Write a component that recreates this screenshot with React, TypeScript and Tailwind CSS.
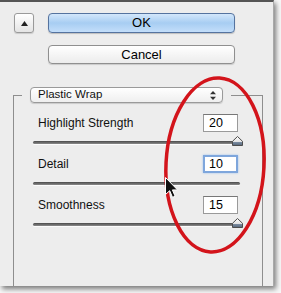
import React from "react";

function Thumb() {
  return (
    <svg className="absolute right-[-3px] top-[-5px]" width="11" height="10" viewBox="0 0 11 10">
      <defs>
        <linearGradient id="tg" x1="0" y1="0" x2="0" y2="1">
          <stop offset="0" stopColor="#ffffff" />
          <stop offset="0.6" stopColor="#e2e2e2" />
          <stop offset="0.61" stopColor="#7d8ea3" />
          <stop offset="1" stopColor="#56667a" />
        </linearGradient>
      </defs>
      <path d="M5.5 0.5 L10.5 5.3 L10.5 9.5 L0.5 9.5 L0.5 5.3 Z" fill="url(#tg)" stroke="#4d4d4d" strokeWidth="1" />
    </svg>
  );
}

function Slider({ thumb }: { thumb: boolean }) {
  return (
    <div className="h-[23px] pt-[9px]">
      <div className="relative ml-[-5px] mr-[-2px] h-[3px] rounded-full bg-gradient-to-b from-[#4a4a4a] to-[#8c8c8c] shadow-[0_1px_0_rgba(255,255,255,0.8)]">
        {thumb && <Thumb />}
      </div>
    </div>
  );
}

function Param({ label, value, focused, thumb }: { label: string; value: string; focused?: boolean; thumb: boolean }) {
  return (
    <div className="flex flex-col">
      <div className="flex h-[18px] items-center justify-between">
        <span className="text-[12px] text-[#111]">{label}</span>
        <div
          className={
            focused
              ? "flex h-[18px] w-[35px] items-center border-2 border-[#7ea6dc] bg-white pl-[4px] text-[12.5px] text-black shadow-[0_0_2px_#9cc0ee]"
              : "flex h-[18px] w-[35px] items-center border border-[#9a9a9a] border-t-[#777] bg-white pl-[5px] text-[12.5px] text-black"
          }
        >
          {value}
        </div>
      </div>
      <Slider thumb={thumb} />
    </div>
  );
}

export default function App() {
  return (
    <div className="relative h-[293px] w-[281px] overflow-hidden bg-[#f7f7f7] font-['Liberation_Sans',Arial,sans-serif]">
      <div className="flex h-[286px] w-[274px] flex-col border-t-2 border-r border-t-[#555] border-r-[#a9a9a9] bg-[#ededed] pt-[11px] shadow-[2px_3px_5px_rgba(0,0,0,0.5)]">
        <div className="flex gap-[14px] pl-[14px]">
          <div className="flex h-[20px] w-[20px] items-center justify-center rounded-[3px] border border-[#9a9a9a] bg-gradient-to-b from-white to-[#e4e4e4] shadow-[0_1px_1px_rgba(0,0,0,0.15)]">
            <svg width="7" height="5" viewBox="0 0 7 5">
              <path d="M3.5 0 L7 5 L0 5 Z" fill="#222" />
            </svg>
          </div>
          <div className="flex h-[20px] w-[187px] items-center justify-center rounded-[4px] border border-[#55739f] bg-gradient-to-b from-[#d3e7fb] via-[#a7cdf2] to-[#c3defa] text-[13px] text-black shadow-[0_1px_1px_rgba(0,0,0,0.2)]">
            OK
          </div>
        </div>
        <div className="mt-[12px] pl-[48px]">
          <div className="flex h-[19px] w-[187px] items-center justify-center rounded-[4px] border border-[#8f8f8f] bg-gradient-to-b from-white to-[#ececec] text-[13px] text-black shadow-[0_1px_1px_rgba(0,0,0,0.15)]">
            Cancel
          </div>
        </div>
        <div className="ml-[13px] mt-[23px] flex w-[250px] flex-1 flex-col">
          <div className="flex h-[16px]">
            <div className="h-[8px] w-[9px] self-end border-l border-t border-[#8e8e8e]" />
            <div className="mx-[8px] flex h-[16px] w-[193px] items-center justify-between rounded-[4px] border border-[#9a9a9a] bg-gradient-to-b from-white to-[#efefef] pl-[7px] pr-[6px] shadow-[0_1px_1px_rgba(0,0,0,0.15)]">
              <span className="text-[11.5px] text-[#111]">Plastic Wrap</span>
              <svg width="6" height="9" viewBox="0 0 6 9">
                <path d="M3 0 L6 3.3 L0 3.3 Z" fill="#333" />
                <path d="M3 9 L6 5.7 L0 5.7 Z" fill="#333" />
              </svg>
            </div>
            <div className="h-[8px] flex-1 self-end border-r border-t border-[#8e8e8e]" />
          </div>
          <div className="flex flex-1 flex-col border-l border-r border-[#8e8e8e] px-[24px] pt-[11px]">
            <Param label="Highlight Strength" value="20" thumb />
            <Param label="Detail" value="10" focused thumb={false} />
            <Param label="Smoothness" value="15" thumb />
          </div>
        </div>
      </div>
      <svg className="pointer-events-none absolute left-0 top-0" width="281" height="293" viewBox="0 0 281 293">
        <ellipse cx="215" cy="165" rx="49" ry="87" fill="none" stroke="#d3141b" strokeWidth="3.5" transform="rotate(3 215 165)" />
        <path
          d="M0 0 L0 17 L4.2 13.2 L7 19.8 L9.6 18.7 L6.9 12.4 L12 12.4 Z"
          fill="#111"
          stroke="#fff"
          strokeWidth="1"
          strokeLinejoin="round"
          transform="translate(165.5 177.5)"
        />
      </svg>
    </div>
  );
}
